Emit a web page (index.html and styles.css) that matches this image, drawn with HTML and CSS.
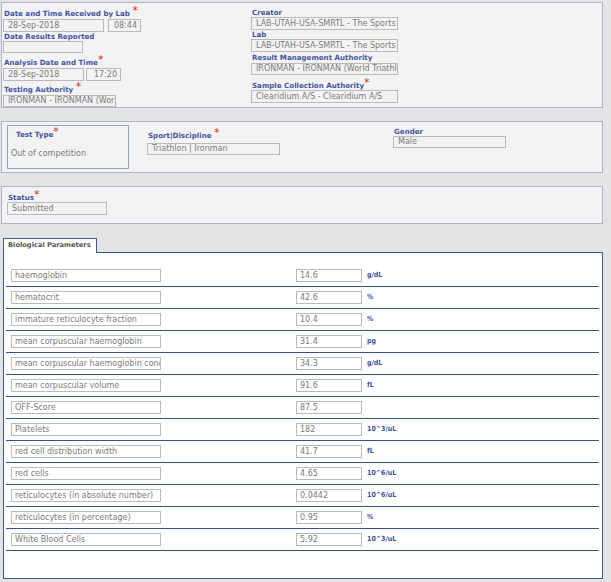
FILE: index.html
```html
<!DOCTYPE html>
<html>
<head>
<meta charset="utf-8">
<link rel="stylesheet" href="styles.css">
</head>
<body>
<div class="page">
  <section class="panel p1">
    <div class="col col-left">
      <div class="lbl m6">Date and Time Received by Lab <span class="req">*</span></div>
      <div class="pair m1">
        <div class="inp h13 w101">28-Sep-2018</div>
        <div class="inp h13 w33 time">08:44</div>
      </div>
      <div class="lbl">Date Results Reported</div>
      <div class="inp h12 w80"></div>
      <div class="lbl m5">Analysis Date and Time<span class="req">*</span></div>
      <div class="pair m1 tight">
        <div class="inp h13 w81">28-Sep-2018</div>
        <div class="inp h13 w35 time">17:20</div>
      </div>
      <div class="lbl m4">Testing Authority <span class="req">*</span></div>
      <div class="inp h12 w113 m1">IRONMAN - IRONMAN (World Triathlon Corporation)</div>
    </div>
    <div class="col col-right">
      <div class="lbl m5">Creator</div>
      <div class="inp h13 w147">LAB-UTAH-USA-SMRTL - The Sports Medicine Research</div>
      <div class="lbl">Lab</div>
      <div class="inp h13 w147">LAB-UTAH-USA-SMRTL - The Sports Medicine Research</div>
      <div class="lbl m1">Result Management Authority</div>
      <div class="inp h12 w147 m1">IRONMAN - IRONMAN (World Triathlon Corporation)</div>
      <div class="lbl m6">Sample Collection Authority<span class="req">*</span></div>
      <div class="inp h13 w147">Clearidium A/S - Clearidium A/S</div>
    </div>
  </section>

  <section class="panel p2">
    <div class="testtype">
      <div class="lbl tt-lbl">Test Type<span class="req">*</span></div>
      <div class="tt-val">Out of competition</div>
    </div>
    <div class="sport">
      <div class="lbl m6">Sport|Discipline <span class="req">*</span></div>
      <div class="inp h12 w133 m3">Triathlon | Ironman</div>
    </div>
    <div class="gender">
      <div class="lbl m2">Gender</div>
      <div class="inp h12 w113">Male</div>
    </div>
  </section>

  <section class="panel p3">
    <div class="lbl m6">Status<span class="req">*</span></div>
    <div class="inp h13 w100">Submitted</div>
  </section>

  <div class="tab">Biological Parameters</div>
  <section class="bio">
    <div class="row"><div class="inp name">haemoglobin</div><div class="inp val">14.6</div><div class="unit">g/dL</div></div>
    <div class="row"><div class="inp name">hematocrit</div><div class="inp val">42.6</div><div class="unit">%</div></div>
    <div class="row"><div class="inp name">immature reticulocyte fraction</div><div class="inp val">10.4</div><div class="unit">%</div></div>
    <div class="row"><div class="inp name">mean corpuscular haemoglobin</div><div class="inp val">31.4</div><div class="unit">pg</div></div>
    <div class="row"><div class="inp name">mean corpuscular haemoglobin concentration</div><div class="inp val">34.3</div><div class="unit">g/dL</div></div>
    <div class="row"><div class="inp name">mean corpuscular volume</div><div class="inp val">91.6</div><div class="unit">fL</div></div>
    <div class="row"><div class="inp name">OFF-Score</div><div class="inp val">87.5</div><div class="unit"></div></div>
    <div class="row"><div class="inp name">Platelets</div><div class="inp val">182</div><div class="unit">10^3/uL</div></div>
    <div class="row"><div class="inp name">red cell distribution width</div><div class="inp val">41.7</div><div class="unit">fL</div></div>
    <div class="row"><div class="inp name">red cells</div><div class="inp val">4.65</div><div class="unit">10^6/uL</div></div>
    <div class="row"><div class="inp name">reticulocytes (in absolute number)</div><div class="inp val">0.0442</div><div class="unit">10^6/uL</div></div>
    <div class="row"><div class="inp name">reticulocytes (in percentage)</div><div class="inp val">0.95</div><div class="unit">%</div></div>
    <div class="row"><div class="inp name">White Blood Cells</div><div class="inp val">5.92</div><div class="unit">10^3/uL</div></div>
  </section>
</div>
</body>
</html>
```

FILE: styles.css
```css
* { box-sizing: border-box; }
html, body { margin: 0; padding: 0; }
body {
  background: #e4e4e4;
  font-family: "DejaVu Sans", Verdana, sans-serif;
  font-size: 8px;
  color: #7a7a7a;
  width: 611px;
  height: 582px;
  overflow: hidden;
}
.page { padding: 2px 8px 0 1px; }

.panel {
  background: #f3f3f3;
  border: 1px solid #aab5c7;
}

.lbl {
  font-weight: bold;
  font-size: 7.1px;
  color: #4155a0;
  height: 9px;
  line-height: 9px;
  padding-left: 1px;
  white-space: nowrap;
}
.req {
  color: #d4281c;
  font-weight: normal;
  font-size: 11px;
  line-height: 0;
  vertical-align: 2px;
}

.inp {
  border: 1px solid #b9b9b9;
  background: #f3f3f3;
  white-space: nowrap;
  overflow: hidden;
  padding-left: 4px;
  font-size: 8px;
  color: #7a7a7a;
}
.h12 { height: 12px; line-height: 10px; }
.h13 { height: 13px; line-height: 11px; }
.w33 { width: 33px; }
.w35 { width: 35px; }
.w80 { width: 80px; }
.w81 { width: 81px; }
.w100 { width: 100px; }
.w101 { width: 101px; }
.w113 { width: 113px; }
.w133 { width: 133px; }
.w147 { width: 147px; }
.m1 { margin-top: 1px; }
.m2 { margin-top: 2px; }
.m3 { margin-top: 3px; }
.m4 { margin-top: 4px; }
.m5 { margin-top: 5px; }
.m6 { margin-top: 6px; }
.time { text-align: right; padding: 0 3px 0 0; }

.pair { display: flex; gap: 4px; }
.pair.tight { gap: 2px; }

/* panel 1 */
.p1 {
  display: flex;
  height: 106px;
  padding-left: 1px;
}
.col-left { width: 248px; }
.col-right { width: 160px; }

/* panel 2 */
.p2 {
  margin-top: 13px;
  height: 52px;
  display: flex;
  align-items: flex-start;
  padding: 3px 0 0 5px;
}
.testtype {
  width: 122px;
  height: 44px;
  border: 1px solid #8ea2c4;
}
.tt-lbl { margin: 4px 0 0 7px; }
.tt-val {
  margin: 10px 0 0 3px;
  height: 10px;
  line-height: 10px;
  color: #7a7a7a;
}
.sport { margin-left: 18px; }
.gender { margin-left: 113px; }

/* panel 3 */
.p3 {
  margin-top: 13px;
  height: 38px;
  padding-left: 5px;
}

/* tab + biological parameters */
.tab {
  position: relative;
  z-index: 1;
  margin: 14px 0 -1px 2px;
  width: 94px;
  height: 15px;
  background: #ffffff;
  border: 1px solid #3b5b8e;
  border-bottom: none;
  font-weight: bold;
  font-size: 6.7px;
  color: #555555;
  line-height: 13px;
  padding-left: 4px;
  white-space: nowrap;
}
.bio {
  margin-left: 2px;
  width: 600px;
  height: 327px;
  background: #ffffff;
  border: 1px solid #3b5b8e;
  padding: 12px 3px 0 2px;
}
.row {
  display: flex;
  align-items: flex-start;
  height: 22px;
  border-bottom: 1px solid #34538a;
  padding-left: 5px;
}
.row .inp {
  margin-top: 4px;
  height: 13px;
  line-height: 11px;
  background: #ffffff;
  padding-left: 3px;
}
.row .name { width: 150px; }
.row .val { width: 66px; margin-left: 135px; }
.unit {
  margin: 4px 0 0 5px;
  height: 13px;
  line-height: 13px;
  font-family: "DejaVu Sans Condensed", "DejaVu Sans", sans-serif;
  font-stretch: condensed;
  font-weight: bold;
  font-size: 7px;
  color: #3c4f96;
  white-space: nowrap;
}
```
